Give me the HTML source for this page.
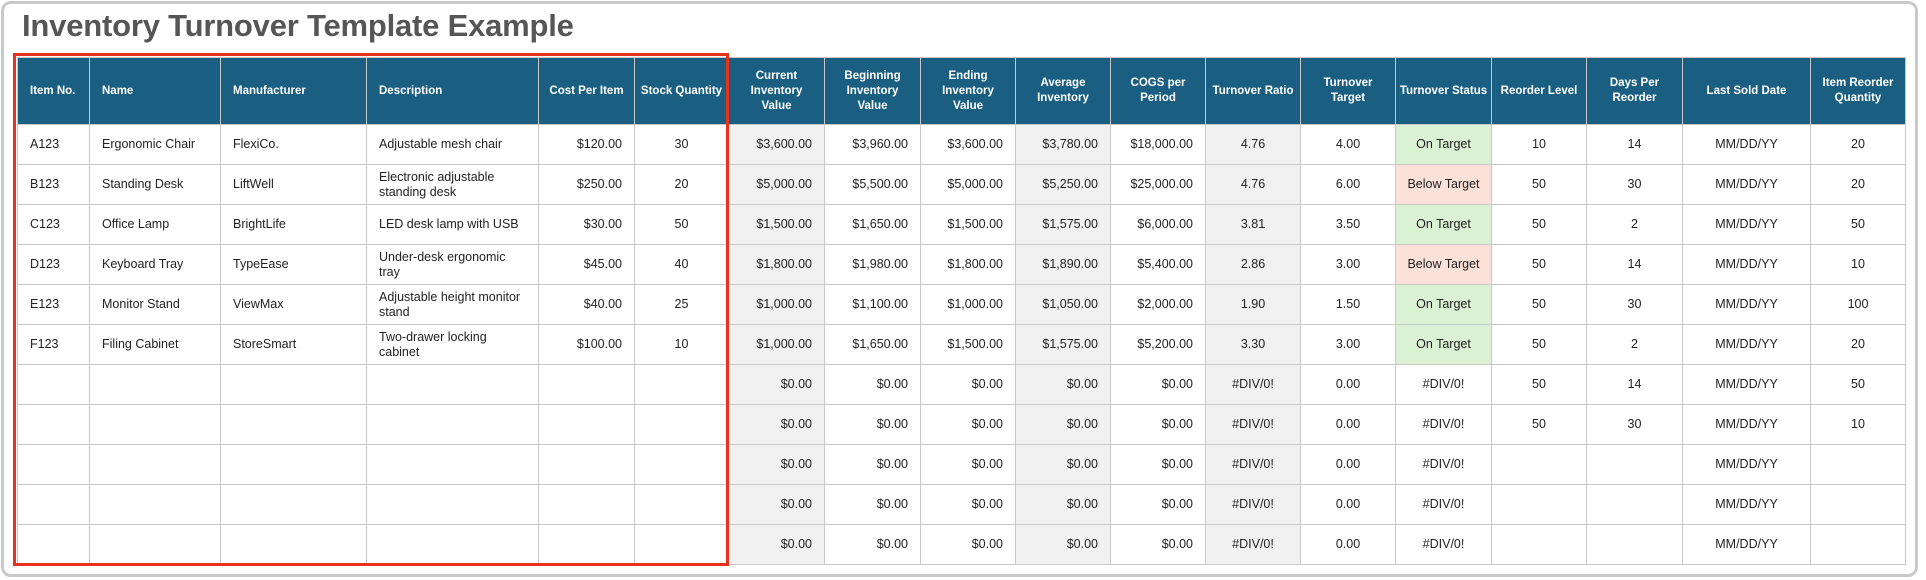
<!DOCTYPE html>
<html><head><meta charset="utf-8"><style>
*{margin:0;padding:0;box-sizing:border-box}
body{width:1926px;height:580px;background:#fff;position:relative;overflow:hidden;font-family:"Liberation Sans",sans-serif}
.frame{position:absolute;left:1px;top:1px;width:1917px;height:576px;border:3px solid #c9c9c9;border-radius:10px}
h1{position:absolute;left:22px;top:8px;font-size:31px;font-weight:bold;color:#565656;letter-spacing:-0.2px}
table{position:absolute;left:17px;top:57px;border-collapse:collapse;table-layout:fixed;width:1888px}
th{background:#1a5f82;color:#fff;font-size:11.5px;font-weight:bold;height:67px;border:1px solid #c8c8c8;text-align:center;line-height:15px;padding:0 2px;white-space:nowrap}
td{height:40px;max-height:40px;border:1px solid #c8c8c8;font-size:12.5px;color:#222;text-align:center;line-height:15px;padding:0 6px;white-space:nowrap;overflow:hidden}
th.l{text-align:left;padding-left:12px}
td.l{text-align:left;padding-left:12px}
td.d{text-align:left;padding-left:12px}
td.r{text-align:right;padding-right:12px}
.g{background:#f1f1f1}
.ok{background:#dbf1d3}
.bad{background:#fbe1d7}
.red{position:absolute;left:13px;top:53px;width:716px;height:513px;border:3px solid #e8321c}
</style></head><body>
<div class="frame"></div>
<h1>Inventory Turnover Template Example</h1>
<table>
<colgroup><col style="width:72px"><col style="width:131px"><col style="width:146px"><col style="width:172px"><col style="width:96px"><col style="width:94px"><col style="width:96px"><col style="width:96px"><col style="width:95px"><col style="width:95px"><col style="width:95px"><col style="width:95px"><col style="width:95px"><col style="width:96px"><col style="width:95px"><col style="width:96px"><col style="width:128px"><col style="width:95px"></colgroup>
<tr><th class="l">Item No.</th><th class="l">Name</th><th class="l">Manufacturer</th><th class="l">Description</th><th>Cost Per Item</th><th>Stock Quantity</th><th>Current<br>Inventory<br>Value</th><th>Beginning<br>Inventory<br>Value</th><th>Ending<br>Inventory<br>Value</th><th>Average<br>Inventory</th><th>COGS per<br>Period</th><th>Turnover Ratio</th><th>Turnover<br>Target</th><th>Turnover Status</th><th>Reorder Level</th><th>Days Per<br>Reorder</th><th>Last Sold Date</th><th>Item Reorder<br>Quantity</th></tr>
<tr><td class="l">A123</td><td class="l">Ergonomic Chair</td><td class="l">FlexiCo.</td><td class="d">Adjustable mesh chair</td><td class="r">$120.00</td><td>30</td><td class="r g">$3,600.00</td><td class="r">$3,960.00</td><td class="r">$3,600.00</td><td class="r g">$3,780.00</td><td class="r">$18,000.00</td><td class="g">4.76</td><td>4.00</td><td class="ok">On Target</td><td>10</td><td>14</td><td>MM/DD/YY</td><td>20</td></tr>
<tr><td class="l">B123</td><td class="l">Standing Desk</td><td class="l">LiftWell</td><td class="d">Electronic adjustable<br>standing desk</td><td class="r">$250.00</td><td>20</td><td class="r g">$5,000.00</td><td class="r">$5,500.00</td><td class="r">$5,000.00</td><td class="r g">$5,250.00</td><td class="r">$25,000.00</td><td class="g">4.76</td><td>6.00</td><td class="bad">Below Target</td><td>50</td><td>30</td><td>MM/DD/YY</td><td>20</td></tr>
<tr><td class="l">C123</td><td class="l">Office Lamp</td><td class="l">BrightLife</td><td class="d">LED desk lamp with USB</td><td class="r">$30.00</td><td>50</td><td class="r g">$1,500.00</td><td class="r">$1,650.00</td><td class="r">$1,500.00</td><td class="r g">$1,575.00</td><td class="r">$6,000.00</td><td class="g">3.81</td><td>3.50</td><td class="ok">On Target</td><td>50</td><td>2</td><td>MM/DD/YY</td><td>50</td></tr>
<tr><td class="l">D123</td><td class="l">Keyboard Tray</td><td class="l">TypeEase</td><td class="d">Under-desk ergonomic<br>tray</td><td class="r">$45.00</td><td>40</td><td class="r g">$1,800.00</td><td class="r">$1,980.00</td><td class="r">$1,800.00</td><td class="r g">$1,890.00</td><td class="r">$5,400.00</td><td class="g">2.86</td><td>3.00</td><td class="bad">Below Target</td><td>50</td><td>14</td><td>MM/DD/YY</td><td>10</td></tr>
<tr><td class="l">E123</td><td class="l">Monitor Stand</td><td class="l">ViewMax</td><td class="d">Adjustable height monitor<br>stand</td><td class="r">$40.00</td><td>25</td><td class="r g">$1,000.00</td><td class="r">$1,100.00</td><td class="r">$1,000.00</td><td class="r g">$1,050.00</td><td class="r">$2,000.00</td><td class="g">1.90</td><td>1.50</td><td class="ok">On Target</td><td>50</td><td>30</td><td>MM/DD/YY</td><td>100</td></tr>
<tr><td class="l">F123</td><td class="l">Filing Cabinet</td><td class="l">StoreSmart</td><td class="d">Two-drawer locking<br>cabinet</td><td class="r">$100.00</td><td>10</td><td class="r g">$1,000.00</td><td class="r">$1,650.00</td><td class="r">$1,500.00</td><td class="r g">$1,575.00</td><td class="r">$5,200.00</td><td class="g">3.30</td><td>3.00</td><td class="ok">On Target</td><td>50</td><td>2</td><td>MM/DD/YY</td><td>20</td></tr>
<tr><td></td><td></td><td></td><td></td><td></td><td></td><td class="r g">$0.00</td><td class="r">$0.00</td><td class="r">$0.00</td><td class="r g">$0.00</td><td class="r">$0.00</td><td class="g">#DIV/0!</td><td>0.00</td><td>#DIV/0!</td><td>50</td><td>14</td><td>MM/DD/YY</td><td>50</td></tr>
<tr><td></td><td></td><td></td><td></td><td></td><td></td><td class="r g">$0.00</td><td class="r">$0.00</td><td class="r">$0.00</td><td class="r g">$0.00</td><td class="r">$0.00</td><td class="g">#DIV/0!</td><td>0.00</td><td>#DIV/0!</td><td>50</td><td>30</td><td>MM/DD/YY</td><td>10</td></tr>
<tr><td></td><td></td><td></td><td></td><td></td><td></td><td class="r g">$0.00</td><td class="r">$0.00</td><td class="r">$0.00</td><td class="r g">$0.00</td><td class="r">$0.00</td><td class="g">#DIV/0!</td><td>0.00</td><td>#DIV/0!</td><td></td><td></td><td>MM/DD/YY</td><td></td></tr>
<tr><td></td><td></td><td></td><td></td><td></td><td></td><td class="r g">$0.00</td><td class="r">$0.00</td><td class="r">$0.00</td><td class="r g">$0.00</td><td class="r">$0.00</td><td class="g">#DIV/0!</td><td>0.00</td><td>#DIV/0!</td><td></td><td></td><td>MM/DD/YY</td><td></td></tr>
<tr><td></td><td></td><td></td><td></td><td></td><td></td><td class="r g">$0.00</td><td class="r">$0.00</td><td class="r">$0.00</td><td class="r g">$0.00</td><td class="r">$0.00</td><td class="g">#DIV/0!</td><td>0.00</td><td>#DIV/0!</td><td></td><td></td><td>MM/DD/YY</td><td></td></tr>
</table>
<div class="red"></div>
</body></html>
